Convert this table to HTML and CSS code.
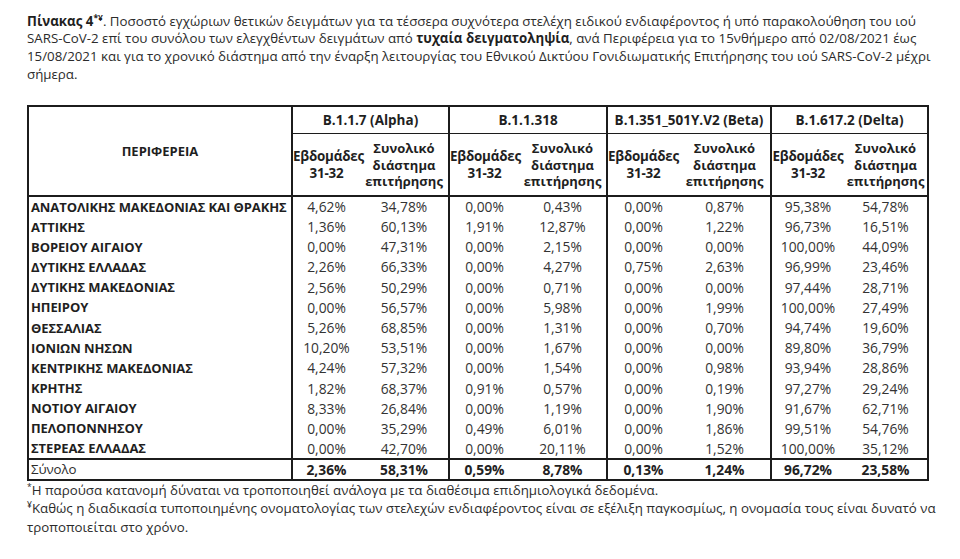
FILE: index.html
```html
<!DOCTYPE html>
<html lang="el">
<head>
<meta charset="utf-8">
<title>Πίνακας 4</title>
<link rel="stylesheet" href="styles.css">
</head>
<body>
<div class="page">
  <p class="caption"><b>Πίνακας 4<sup>*¥</sup></b>. Ποσοστό εγχώριων θετικών δειγμάτων για τα τέσσερα συχνότερα στελέχη ειδικού ενδιαφέροντος ή υπό παρακολούθηση του ιού<br>SARS-CoV-2 επί του συνόλου των ελεγχθέντων δειγμάτων από <b>τυχαία δειγματοληψία</b>, ανά Περιφέρεια για το 15νθήμερο από 02/08/2021 έως<br>15/08/2021 και για το χρονικό διάστημα από την έναρξη λειτουργίας του Εθνικού Δικτύου Γονιδιωματικής Επιτήρησης του ιού SARS-CoV-2 μέχρι<br>σήμερα.</p>

  <table class="data">
    <colgroup>
      <col class="c-reg">
      <col class="c-a1"><col class="c-a2">
      <col class="c-b1"><col class="c-b2">
      <col class="c-c1"><col class="c-c2">
      <col class="c-d1"><col class="c-d2">
    </colgroup>
    <thead>
      <tr class="h1">
        <th rowspan="2" class="reg-h">ΠΕΡΙΦΕΡΕΙΑ</th>
        <th colspan="2" class="grp">B.1.1.7 (Alpha)</th>
        <th colspan="2" class="grp">B.1.1.318</th>
        <th colspan="2" class="grp">B.1.351_501Y.V2 (Beta)</th>
        <th colspan="2" class="grp">B.1.617.2 (Delta)</th>
      </tr>
      <tr class="h2">
        <th class="g1">Εβδομάδες<br>31-32</th><th class="g2">Συνολικό<br>διάστημα<br>επιτήρησης</th>
        <th class="g1">Εβδομάδες<br>31-32</th><th class="g2">Συνολικό<br>διάστημα<br>επιτήρησης</th>
        <th class="g1">Εβδομάδες<br>31-32</th><th class="g2">Συνολικό<br>διάστημα<br>επιτήρησης</th>
        <th class="g1">Εβδομάδες<br>31-32</th><th class="g2">Συνολικό<br>διάστημα<br>επιτήρησης</th>
      </tr>
    </thead>
    <tbody>
      <tr><th>ΑΝΑΤΟΛΙΚΗΣ ΜΑΚΕΔΟΝΙΑΣ ΚΑΙ ΘΡΑΚΗΣ</th><td class="g1">4,62%</td><td class="g2">34,78%</td><td class="g1">0,00%</td><td class="g2">0,43%</td><td class="g1">0,00%</td><td class="g2">0,87%</td><td class="g1">95,38%</td><td class="g2">54,78%</td></tr>
      <tr><th>ΑΤΤΙΚΗΣ</th><td class="g1">1,36%</td><td class="g2">60,13%</td><td class="g1">1,91%</td><td class="g2">12,87%</td><td class="g1">0,00%</td><td class="g2">1,22%</td><td class="g1">96,73%</td><td class="g2">16,51%</td></tr>
      <tr><th>ΒΟΡΕΙΟΥ ΑΙΓΑΙΟΥ</th><td class="g1">0,00%</td><td class="g2">47,31%</td><td class="g1">0,00%</td><td class="g2">2,15%</td><td class="g1">0,00%</td><td class="g2">0,00%</td><td class="g1">100,00%</td><td class="g2">44,09%</td></tr>
      <tr><th>ΔΥΤΙΚΗΣ ΕΛΛΑΔΑΣ</th><td class="g1">2,26%</td><td class="g2">66,33%</td><td class="g1">0,00%</td><td class="g2">4,27%</td><td class="g1">0,75%</td><td class="g2">2,63%</td><td class="g1">96,99%</td><td class="g2">23,46%</td></tr>
      <tr><th>ΔΥΤΙΚΗΣ ΜΑΚΕΔΟΝΙΑΣ</th><td class="g1">2,56%</td><td class="g2">50,29%</td><td class="g1">0,00%</td><td class="g2">0,71%</td><td class="g1">0,00%</td><td class="g2">0,00%</td><td class="g1">97,44%</td><td class="g2">28,71%</td></tr>
      <tr><th>ΗΠΕΙΡΟΥ</th><td class="g1">0,00%</td><td class="g2">56,57%</td><td class="g1">0,00%</td><td class="g2">5,98%</td><td class="g1">0,00%</td><td class="g2">1,99%</td><td class="g1">100,00%</td><td class="g2">27,49%</td></tr>
      <tr><th>ΘΕΣΣΑΛΙΑΣ</th><td class="g1">5,26%</td><td class="g2">68,85%</td><td class="g1">0,00%</td><td class="g2">1,31%</td><td class="g1">0,00%</td><td class="g2">0,70%</td><td class="g1">94,74%</td><td class="g2">19,60%</td></tr>
      <tr><th>ΙΟΝΙΩΝ ΝΗΣΩΝ</th><td class="g1">10,20%</td><td class="g2">53,51%</td><td class="g1">0,00%</td><td class="g2">1,67%</td><td class="g1">0,00%</td><td class="g2">0,00%</td><td class="g1">89,80%</td><td class="g2">36,79%</td></tr>
      <tr><th>ΚΕΝΤΡΙΚΗΣ ΜΑΚΕΔΟΝΙΑΣ</th><td class="g1">4,24%</td><td class="g2">57,32%</td><td class="g1">0,00%</td><td class="g2">1,54%</td><td class="g1">0,00%</td><td class="g2">0,98%</td><td class="g1">93,94%</td><td class="g2">28,86%</td></tr>
      <tr><th>ΚΡΗΤΗΣ</th><td class="g1">1,82%</td><td class="g2">68,37%</td><td class="g1">0,91%</td><td class="g2">0,57%</td><td class="g1">0,00%</td><td class="g2">0,19%</td><td class="g1">97,27%</td><td class="g2">29,24%</td></tr>
      <tr><th>ΝΟΤΙΟΥ ΑΙΓΑΙΟΥ</th><td class="g1">8,33%</td><td class="g2">26,84%</td><td class="g1">0,00%</td><td class="g2">1,19%</td><td class="g1">0,00%</td><td class="g2">1,90%</td><td class="g1">91,67%</td><td class="g2">62,71%</td></tr>
      <tr><th>ΠΕΛΟΠΟΝΝΗΣΟΥ</th><td class="g1">0,00%</td><td class="g2">35,29%</td><td class="g1">0,49%</td><td class="g2">6,01%</td><td class="g1">0,00%</td><td class="g2">1,86%</td><td class="g1">99,51%</td><td class="g2">54,76%</td></tr>
      <tr><th>ΣΤΕΡΕΑΣ ΕΛΛΑΔΑΣ</th><td class="g1">0,00%</td><td class="g2">42,70%</td><td class="g1">0,00%</td><td class="g2">20,11%</td><td class="g1">0,00%</td><td class="g2">1,52%</td><td class="g1">100,00%</td><td class="g2">35,12%</td></tr>
    </tbody>
    <tfoot>
      <tr><th>Σύνολο</th><td class="g1">2,36%</td><td class="g2">58,31%</td><td class="g1">0,59%</td><td class="g2">8,78%</td><td class="g1">0,13%</td><td class="g2">1,24%</td><td class="g1">96,72%</td><td class="g2">23,58%</td></tr>
    </tfoot>
  </table>

  <div class="notes">
    <p><sup>*</sup>Η παρούσα κατανομή δύναται να τροποποιηθεί ανάλογα με τα διαθέσιμα επιδημιολογικά δεδομένα.</p>
    <p><sup>¥</sup>Καθώς η διαδικασία τυποποιημένης ονοματολογίας των στελεχών ενδιαφέροντος είναι σε εξέλιξη παγκοσμίως, η ονομασία τους είναι δυνατό να<br>τροποποιείται στο χρόνο.</p>
  </div>
</div>
</body>
</html>
```

FILE: styles.css
```css
html, body {
  margin: 0;
  padding: 0;
  background: #ffffff;
}

.page {
  width: 960px;
  height: 559px;
  box-sizing: border-box;
  padding: 12.5px 0 0 27px;
  font-family: "Open Sans", "Noto Sans", sans-serif;
  color: #2b2b2b;
  overflow: hidden;
}

.caption {
  margin: 0;
  font-size: 13.3px;
  line-height: 17.7px;
  white-space: nowrap;
}

.caption b {
  font-weight: 700;
  color: #1f1f1f;
}

.caption sup,
.notes sup {
  font-size: 8.5px;
  line-height: 0;
  vertical-align: 5px;
}

.data {
  margin-top: 22px;
  width: 900px;
  table-layout: fixed;
  border-collapse: collapse;
  border: 2px solid #1c1c1c;
  font-size: 13px;
  color: #333333;
}

.c-reg { width: 264px; }
.c-a1 { width: 68px; }
.c-a2 { width: 89px; }
.c-b1 { width: 70px; }
.c-b2 { width: 88px; }
.c-c1 { width: 72px; }
.c-c2 { width: 92px; }
.c-d1 { width: 73px; }
.c-d2 { width: 84px; }

.data th,
.data td {
  padding: 0;
  white-space: nowrap;
  overflow: visible;
}

.data thead th {
  font-weight: 700;
  color: #1f1f1f;
  text-align: center;
  vertical-align: middle;
}

.data .h1 th {
  height: 26px;
}

.data .h1 .grp {
  border-left: 2px solid #1c1c1c;
  border-right: 2px solid #1c1c1c;
  border-bottom: 1.5px solid #1c1c1c;
  font-size: 13.5px;
}

.data .reg-h {
  border-right: 2px solid #1c1c1c;
  border-bottom: 2px solid #1c1c1c;
  font-size: 13px;
}

.data .h2 th {
  height: 61px;
  line-height: 16.5px;
  font-size: 13px;
  border-bottom: 2px solid #1c1c1c;
}

.data .h2 .g1 {
  border-left: 2px solid #1c1c1c;
  font-size: 13.4px;
  letter-spacing: -0.2px;
}

.data tbody th,
.data tfoot th {
  text-align: left;
  font-weight: 700;
  font-size: 13px;
  color: #1f1f1f;
  padding-left: 2px;
  letter-spacing: -0.1px;
  border-right: 2px solid #1c1c1c;
}

.data tbody tr {
  height: 20.2px;
}

.data tbody td,
.data tfoot td {
  text-align: center;
  vertical-align: middle;
  font-size: 13.8px;
}

.data td.g1 {
  border-left: 2px solid #1c1c1c;
}

.data tfoot tr {
  height: 17px;
}

.data tfoot th,
.data tfoot td {
  border-top: 2px solid #1c1c1c;
}

.data tfoot th {
  font-weight: 400;
  font-size: 13.3px;
  color: #2b2b2b;
}

.data tfoot td {
  font-weight: 700;
  color: #222222;
}

.notes {
  font-size: 13.3px;
  line-height: 18.5px;
  color: #2b2b2b;
}

.notes p {
  margin: 0;
  white-space: nowrap;
}
```
